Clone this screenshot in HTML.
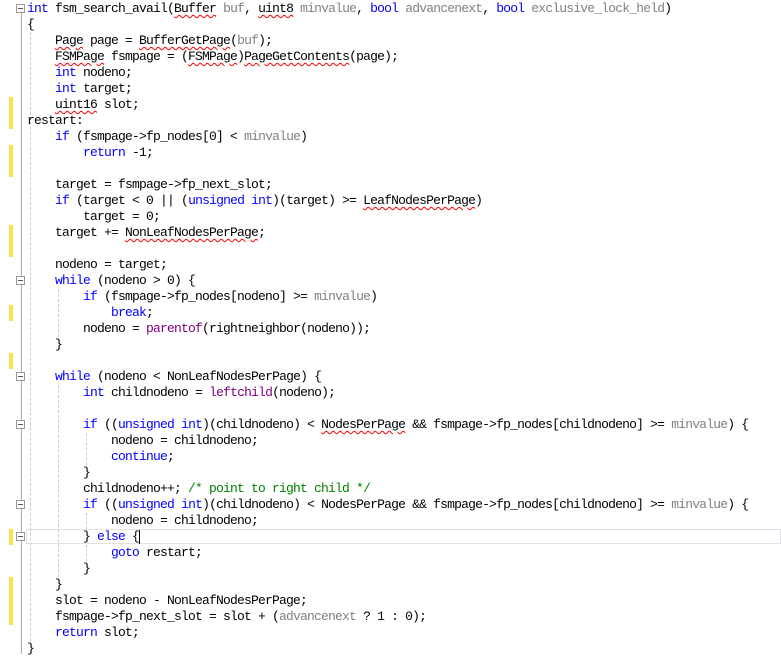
<!DOCTYPE html><html><head><style>
body{margin:0;width:781px;height:654px;background:#fff;overflow:hidden;position:relative;font-family:"Liberation Mono",monospace;}
.l{position:absolute;left:27px;height:16px;line-height:16px;white-space:pre;font-size:13px;letter-spacing:-0.8px;color:#000;}
.k{color:#0000ff}.p{color:#808080}.c{color:#008000}.f{color:#800080}
.u{text-decoration:underline wavy #ff0000;text-decoration-thickness:1px;text-underline-offset:2px}
.y{position:absolute;left:9px;width:4px;height:16px;background:#f5e44a}
.b{position:absolute;left:16px;width:9px;height:9px;border:1px solid #999;background:#fff;box-sizing:border-box}
.b:after{content:"";position:absolute;left:1px;top:3px;width:5px;height:1px;background:#555}
.g{position:absolute;width:0;border-left:1px dashed #ccc}
</style></head><body>
<div style="position:absolute;left:21px;top:13px;height:641px;width:1px;background:#aaa"></div>
<div style="position:absolute;left:26px;top:529px;width:755px;height:15px;border:1px solid #e0e0e8;box-sizing:border-box"></div>
<div class="g" style="left:30px;top:17px;height:624px"></div>
<div class="g" style="left:58px;top:289px;height:48px"></div>
<div class="g" style="left:58px;top:385px;height:192px"></div>
<div class="g" style="left:86px;top:433px;height:32px"></div>
<div class="g" style="left:86px;top:513px;height:16px"></div>
<div class="g" style="left:86px;top:545px;height:16px"></div>
<div class="y" style="top:97px;height:32px"></div>
<div class="y" style="top:145px;height:32px"></div>
<div class="y" style="top:225px;height:32px"></div>
<div class="y" style="top:305px"></div>
<div class="y" style="top:353px"></div>
<div class="y" style="top:529px"></div>
<div class="y" style="top:577px;height:48px"></div>
<div class="b" style="top:4px"></div>
<div class="b" style="top:276px"></div>
<div class="b" style="top:372px"></div>
<div class="b" style="top:420px"></div>
<div class="b" style="top:500px"></div>
<div class="b" style="top:532px"></div>
<div style="position:absolute;left:139px;top:530px;width:1px;height:14px;background:#000"></div>
<div class="l" style="top:1px"><span class="k">int</span> fsm_search_avail(<span class="u">Buffer</span> <span class="p">buf</span>, <span class="u">uint8</span> <span class="p">minvalue</span>, <span class="k">bool</span> <span class="p">advancenext</span>, <span class="k">bool</span> <span class="p">exclusive_lock_held</span>)</div>
<div class="l" style="top:17px">{</div>
<div class="l" style="top:33px">    <span class="u">Page</span> page = <span class="u">BufferGetPage</span>(<span class="p">buf</span>);</div>
<div class="l" style="top:49px">    <span class="u">FSMPage</span> fsmpage = (<span class="u">FSMPage</span>)<span class="u">PageGetContents</span>(page);</div>
<div class="l" style="top:65px">    <span class="k">int</span> nodeno;</div>
<div class="l" style="top:81px">    <span class="k">int</span> target;</div>
<div class="l" style="top:97px">    <span class="u">uint16</span> slot;</div>
<div class="l" style="top:113px">restart:</div>
<div class="l" style="top:129px">    <span class="k">if</span> (fsmpage-&gt;fp_nodes[0] &lt; <span class="p">minvalue</span>)</div>
<div class="l" style="top:145px">        <span class="k">return</span> -1;</div>
<div class="l" style="top:177px">    target = fsmpage-&gt;fp_next_slot;</div>
<div class="l" style="top:193px">    <span class="k">if</span> (target &lt; 0 || (<span class="k">unsigned</span> <span class="k">int</span>)(target) &gt;= <span class="u">LeafNodesPerPage</span>)</div>
<div class="l" style="top:209px">        target = 0;</div>
<div class="l" style="top:225px">    target += <span class="u">NonLeafNodesPerPage</span>;</div>
<div class="l" style="top:257px">    nodeno = target;</div>
<div class="l" style="top:273px">    <span class="k">while</span> (nodeno &gt; 0) {</div>
<div class="l" style="top:289px">        <span class="k">if</span> (fsmpage-&gt;fp_nodes[nodeno] &gt;= <span class="p">minvalue</span>)</div>
<div class="l" style="top:305px">            <span class="k">break</span>;</div>
<div class="l" style="top:321px">        nodeno = <span class="f">parentof</span>(rightneighbor(nodeno));</div>
<div class="l" style="top:337px">    }</div>
<div class="l" style="top:369px">    <span class="k">while</span> (nodeno &lt; NonLeafNodesPerPage) {</div>
<div class="l" style="top:385px">        <span class="k">int</span> childnodeno = <span class="f">leftchild</span>(nodeno);</div>
<div class="l" style="top:417px">        <span class="k">if</span> ((<span class="k">unsigned</span> <span class="k">int</span>)(childnodeno) &lt; <span class="u">NodesPerPage</span> &amp;&amp; fsmpage-&gt;fp_nodes[childnodeno] &gt;= <span class="p">minvalue</span>) {</div>
<div class="l" style="top:433px">            nodeno = childnodeno;</div>
<div class="l" style="top:449px">            <span class="k">continue</span>;</div>
<div class="l" style="top:465px">        }</div>
<div class="l" style="top:481px">        childnodeno++; <span class="c">/* point to right child */</span></div>
<div class="l" style="top:497px">        <span class="k">if</span> ((<span class="k">unsigned</span> <span class="k">int</span>)(childnodeno) &lt; NodesPerPage &amp;&amp; fsmpage-&gt;fp_nodes[childnodeno] &gt;= <span class="p">minvalue</span>) {</div>
<div class="l" style="top:513px">            nodeno = childnodeno;</div>
<div class="l" style="top:529px">        } <span class="k">else</span> {</div>
<div class="l" style="top:545px">            <span class="k">goto</span> restart;</div>
<div class="l" style="top:561px">        }</div>
<div class="l" style="top:577px">    }</div>
<div class="l" style="top:593px">    slot = nodeno - NonLeafNodesPerPage;</div>
<div class="l" style="top:609px">    fsmpage-&gt;fp_next_slot = slot + (<span class="p">advancenext</span> ? 1 : 0);</div>
<div class="l" style="top:625px">    <span class="k">return</span> slot;</div>
<div class="l" style="top:641px">}</div>
</body></html>
